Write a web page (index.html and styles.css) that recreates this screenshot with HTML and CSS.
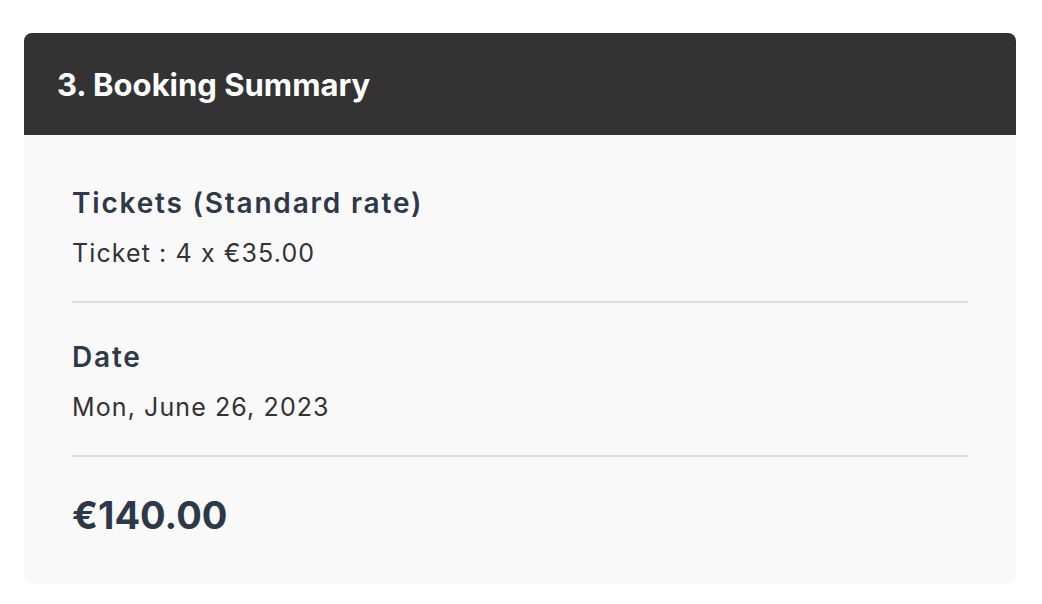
FILE: index.html
```html
<!DOCTYPE html>
<html lang="en">
<head>
<meta charset="utf-8">
<title>Booking Summary</title>
<link rel="stylesheet" href="styles.css">
</head>
<body>
<div class="card">
  <div class="card-header">
    <h2 class="card-title">3. Booking Summary</h2>
  </div>
  <div class="card-body">
    <div class="section">
      <h3 class="section-title">Tickets (Standard rate)</h3>
      <p class="section-text">Ticket : 4 x €35.00</p>
    </div>
    <hr class="divider">
    <div class="section">
      <h3 class="section-title">Date</h3>
      <p class="section-text">Mon, June 26, 2023</p>
    </div>
    <hr class="divider">
    <div class="total">€140.00</div>
  </div>
</div>
</body>
</html>
```
FILE: styles.css
```css
html, body {
  margin: 0;
  padding: 0;
  background: #ffffff;
}
body {
  font-family: "Inter", "Noto Sans", sans-serif;
  padding: 33px 26px 0 24px;
}
.card {
  border-radius: 8px;
  overflow: hidden;
  background: #f9f9f9;
}
.card-header {
  background: #333333;
  height: 102px;
  display: flex;
  align-items: center;
  padding: 0 33px;
}
.card-title {
  margin: 0;
  color: #ffffff;
  font-size: 31px;
  font-weight: 700;
}
.card-body {
  padding: 50px 48px 47px;
}
.section-title {
  margin: 0;
  color: #2d3848;
  font-size: 28px;
  font-weight: 600;
  line-height: 36px;
  letter-spacing: 1.8px;
}
.section-text {
  margin: 16px 0 0;
  color: #333333;
  font-size: 25px;
  line-height: 32px;
  letter-spacing: 1.1px;
}
.divider {
  border: none;
  height: 2px;
  background: #dddddd;
  margin: 32px 0 36px;
}
.total {
  color: #2d3848;
  font-size: 38px;
  font-weight: 700;
  line-height: 44px;
}
```
